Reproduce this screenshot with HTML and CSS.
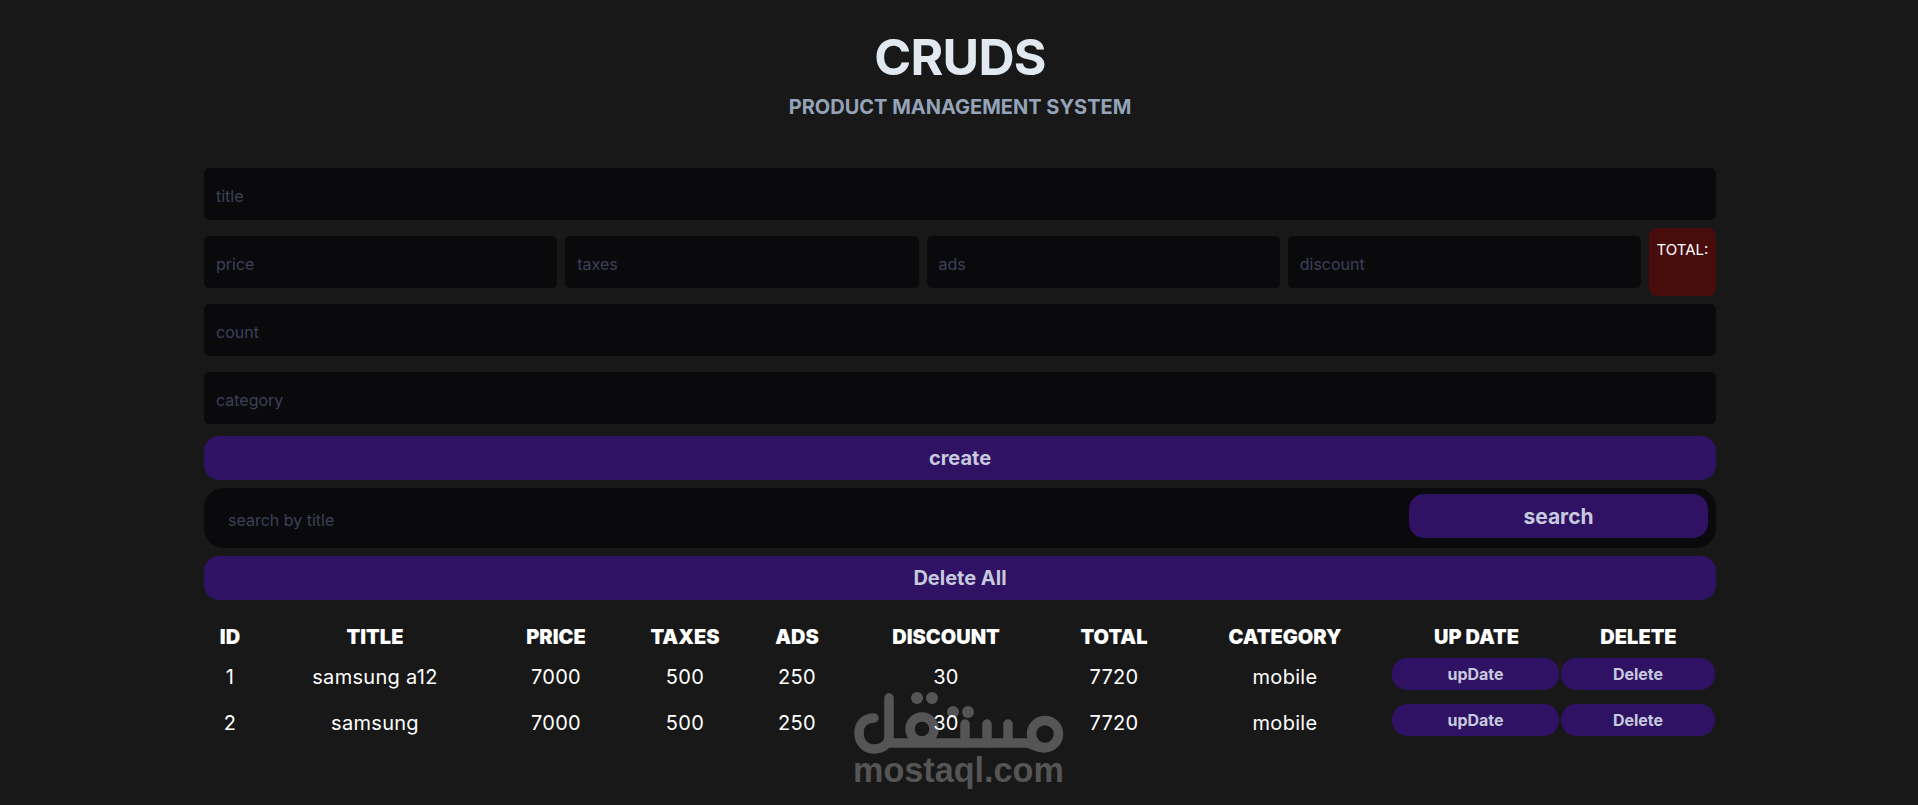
FILE: index.html
```html
<!DOCTYPE html>
<html lang="en">
<head>
    <meta charset="UTF-8">
    <meta name="viewport" content="width=device-width, initial-scale=1.0">
    <title>CRUDS</title>
    <link rel="stylesheet" href="styles.css">
</head>
<body>
    <div class="watermark">
        <svg class="watermark-logo" viewBox="0 0 210 62" width="210" height="62" aria-hidden="true">
            <g fill="none" stroke="#555" stroke-width="9.5" stroke-linecap="round" stroke-linejoin="round">
                <path d="M35 6V44C35 52 29 57 20 57C11 57 5 50 5 41C5 32 11 26 20 26"/>
                <path d="M35 51H172C178 51 182 56 191 56"/>
                <circle cx="68" cy="37" r="12"/>
                <path d="M111 32V51"/>
                <path d="M133 32V51"/>
                <path d="M154 32V51"/>
                <circle cx="191" cy="42" r="13.5"/>
            </g>
            <g fill="#555">
                <circle cx="63" cy="6" r="6"/>
                <circle cx="78" cy="6" r="6"/>
                <circle cx="99" cy="20" r="6"/>
                <circle cx="114" cy="20" r="6"/>
            </g>
        </svg>
        <span>mostaql.com</span>
    </div>

    <div class="crud">
        <div class="head">
            <h2>CRUDS</h2>
            <p>PRODUCT MANAGEMENT SYSTEM</p>
        </div>
        <div class="inputs">
            <input type="text" placeholder="title">
            <div class="price">
                <input type="text" placeholder="price">
                <input type="text" placeholder="taxes">
                <input type="text" placeholder="ads">
                <input type="text" placeholder="discount">
                <small class="total">TOTAL:</small>
            </div>
            <input type="text" placeholder="count">
            <input type="text" placeholder="category">
            <button class="create">create</button>
        </div>
        <div class="search-block">
            <input type="text" placeholder="search by title">
            <button>search</button>
        </div>
        <button class="delete-all">Delete All</button>
        <table>
            <colgroup>
                <col class="c-id"><col class="c-title"><col class="c-price"><col class="c-taxes"><col class="c-ads">
                <col class="c-discount"><col class="c-total"><col class="c-category"><col class="c-update"><col class="c-delete">
            </colgroup>
            <thead>
                <tr>
                    <th>ID</th><th>TITLE</th><th>PRICE</th><th>TAXES</th><th>ADS</th>
                    <th>DISCOUNT</th><th>TOTAL</th><th>CATEGORY</th><th>UP DATE</th><th>DELETE</th>
                </tr>
            </thead>
            <tbody>
                <tr>
                    <td>1</td><td>samsung a12</td><td>7000</td><td>500</td><td>250</td>
                    <td>30</td><td>7720</td><td>mobile</td>
                    <td><button>upDate</button></td><td><button>Delete</button></td>
                </tr>
                <tr>
                    <td>2</td><td>samsung</td><td>7000</td><td>500</td><td>250</td>
                    <td>30</td><td>7720</td><td>mobile</td>
                    <td><button>upDate</button></td><td><button>Delete</button></td>
                </tr>
            </tbody>
        </table>
    </div>
</body>
</html>
```

FILE: styles.css
```css
* {
    margin: 0;
    padding: 0;
    box-sizing: border-box;
}
body {
    background-color: #181818;
    color: #fff;
    font-family: Inter, "Liberation Sans", sans-serif;
    height: 805px;
    overflow: hidden;
    position: relative;
}
.crud {
    width: 1512px;
    margin-left: 204px;
    position: relative;
}
.head {
    height: 168px;
    padding-top: 31px;
    text-align: center;
}
.head h2 {
    font-size: 50px;
    line-height: 52px;
    font-weight: 700;
    letter-spacing: -0.8px;
    color: #e2e8f0;
}
.head p {
    margin-top: 11px;
    font-size: 20px;
    line-height: 26px;
    font-weight: 700;
    color: #94a3b8;
}
input {
    display: block;
    width: 100%;
    height: 52px;
    padding: 4px 12px 0;
    border: none;
    outline: none;
    border-radius: 5px;
    background-color: #0a0a0d;
    color: #fff;
    font-family: inherit;
    font-size: 16px;
}
input::placeholder {
    color: #3d4058;
}
.inputs {
    display: flex;
    flex-direction: column;
    gap: 16px;
}
.price {
    display: flex;
    align-items: center;
    gap: 8px;
    margin: -8px 0;
}
.price input {
    flex: 1;
    min-width: 0;
}
.total {
    width: 67px;
    height: 68px;
    flex-shrink: 0;
    padding-top: 12px;
    border-radius: 8px;
    background-color: #480c0c;
    font-size: 15px;
    text-align: center;
}
button {
    border: none;
    background-color: #2f1263;
    color: #c7c9de;
    font-family: inherit;
    font-weight: 700;
    cursor: pointer;
}
.create,
.delete-all {
    display: block;
    width: 100%;
    height: 44px;
    border-radius: 15px;
    font-size: 20px;
}
.create {
    margin-top: -4px;
}
.search-block {
    display: flex;
    align-items: center;
    justify-content: space-between;
    height: 60px;
    margin: 8px 0;
    padding-right: 8px;
    border-radius: 20px;
    background-color: #0a0a0d;
}
.search-block input {
    flex: 1;
    height: 60px;
    padding-left: 24px;
    background: transparent;
}
.search-block button {
    width: 299px;
    height: 44px;
    margin-bottom: 4px;
    border-radius: 15px;
    font-size: 21px;
}
table {
    width: 100%;
    margin-top: 20px;
    table-layout: fixed;
    border-collapse: collapse;
    text-align: center;
}
.c-id { width: 52px; }
.c-title { width: 238px; }
.c-price { width: 124px; }
.c-taxes { width: 134px; }
.c-ads { width: 90px; }
.c-discount { width: 208px; }
.c-total { width: 128px; }
.c-category { width: 214px; }
.c-update { width: 169px; }
.c-delete { width: 155px; }
th {
    height: 34px;
    font-size: 20px;
    font-weight: 900;
}
td {
    height: 46px;
    font-size: 20px;
    letter-spacing: 0.3px;
}
td button {
    display: block;
    width: calc(100% - 2px);
    height: 32px;
    margin-top: -6px;
    border-radius: 15px;
    font-size: 16px;
}
td:last-child button {
    width: calc(100% - 1px);
}
.watermark {
    position: absolute;
    left: 853px;
    top: 692px;
    width: 210px;
    pointer-events: none;
}
.watermark-logo {
    display: block;
    margin-left: 1px;
}
.watermark span {
    display: block;
    margin-top: -2px;
    font-family: "Liberation Sans", sans-serif;
    font-size: 34.2px;
    line-height: 36px;
    font-weight: 700;
    color: #555;
    white-space: nowrap;
}
```
